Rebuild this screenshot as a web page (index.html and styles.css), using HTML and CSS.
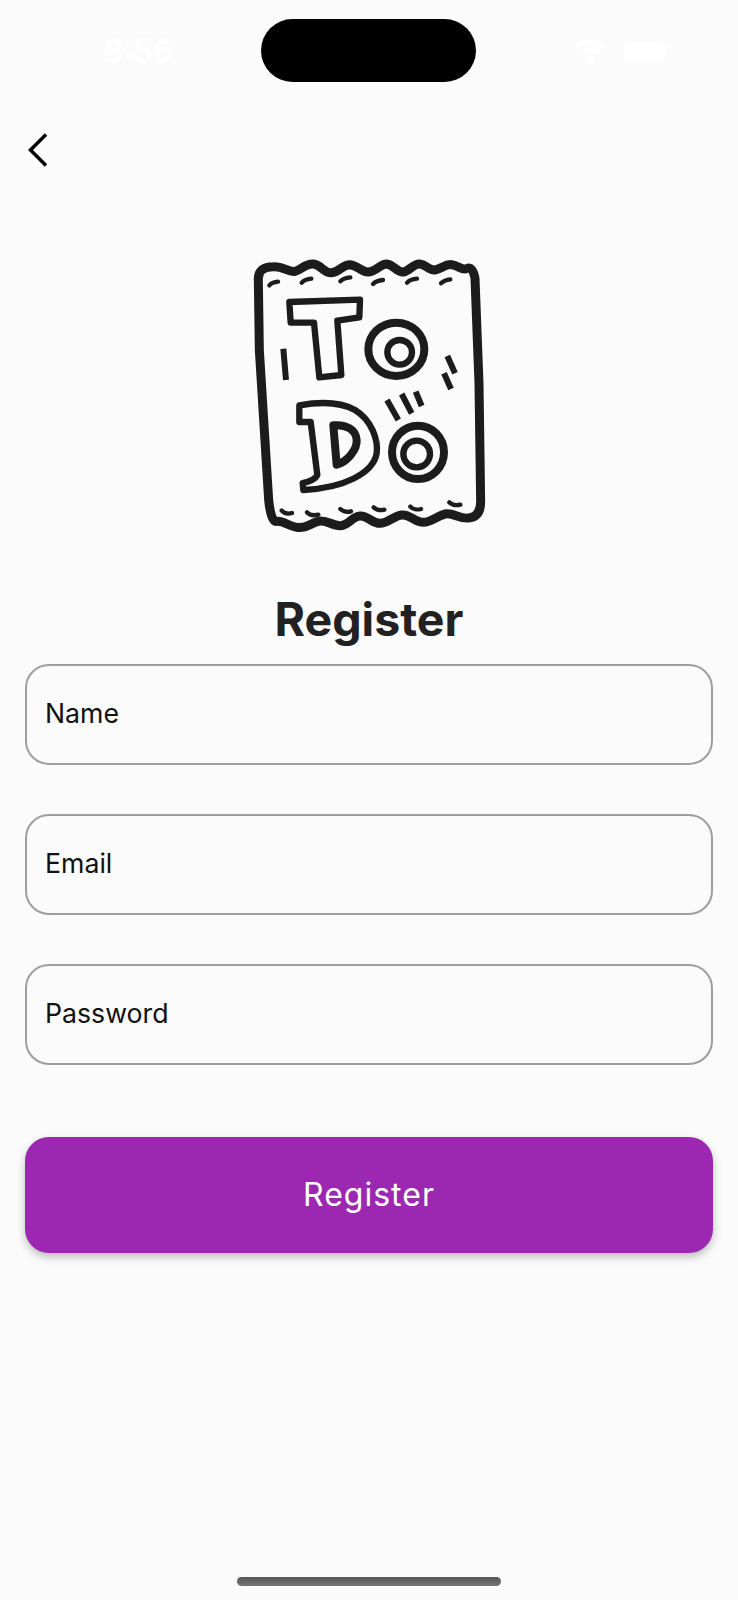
FILE: index.html
```html
<!DOCTYPE html>
<html lang="en">
<head>
<meta charset="utf-8">
<title>Register</title>
<link rel="stylesheet" href="styles.css">
</head>
<body>
<div class="screen">
  <header class="status">
    <span class="time">8:56</span>
    <div class="island"></div>
    <div class="status-icons">
      <svg class="wifi" viewBox="0 0 32 24"><path d="M2 9a20 20 0 0 1 28 0M7.500 14a12 12 0 0 1 17 0" class="wifi-arc"/><circle cx="16" cy="20" r="3.500" class="wifi-dot"/></svg>
      <div class="battery"></div>
    </div>
  </header>
  <nav class="nav">
    <svg class="back" viewBox="0 0 20 34"><path d="M18 1.500 2.500 17 18 32.500"/></svg>
  </nav>
  <svg class="logo" viewBox="0 0 780 870">
    <path class="outline" d="M55 90C53 62 72 50 100 50C130 48 145 68 165 64C185 60 195 40 220 42C245 44 250 70 275 68C300 66 305 44 330 44C355 46 365 68 385 66C410 64 420 42 440 42C462 44 470 68 490 66C510 62 520 40 540 42C560 44 565 62 585 60C605 56 615 42 635 44C655 46 665 62 680 56C692 50 700 60 705 85L717 400L722 755C722 785 710 802 685 804C660 808 640 787 615 792C590 798 575 817 550 817C525 817 510 792 485 795C460 798 445 820 420 820C395 820 385 797 360 798C335 800 325 827 300 827C275 827 260 808 235 814C210 820 200 837 170 832C145 828 130 812 110 814C98 816 90 790 86 750L58 300Z"/>
    <path class="letter" d="M148 156 360 149 358 202 292 212 304 375 238 382 222 218 152 218Z"/>
    <ellipse class="letter-thick" cx="469" cy="298" rx="84" ry="80"/>
    <circle class="letter" cx="479" cy="307" r="37"/>
    <path class="letter" d="M178 466 C240 455 300 455 345 480 C395 510 415 570 410 610 C400 670 310 715 190 720 L188 699 C205 695 225 690 232 675 L212 516 L178 516Z"/>
    <path class="letter-inner" d="M280 526 C320 522 348 540 350 570 C352 600 320 636 290 644Z"/>
    <ellipse class="letter-thick" cx="534" cy="607" rx="78" ry="80"/>
    <circle class="letter" cx="530" cy="612" r="40"/>
    <path class="tick" d="M130 296 138 390M622 318 645 370M612 370 633 417M441 450 475 510M485 432 515 490M527 425 545 468"/>
    <path class="dash" d="M88 106C94 99 104 96 114 95M185 98C192 91 203 87 214 86M301 94C308 87 320 83 331 82M399 102C406 95 418 91 429 90M501 98C508 91 520 87 531 86M603 100C610 93 620 89 631 88"/>
    <path class="dash" d="M125 782C132 790 145 792 156 789M201 787C208 795 222 797 235 794M301 777C310 785 322 787 333 784M401 772C410 780 422 782 433 779M511 770C518 778 532 780 543 777M628 757C637 765 650 767 661 764"/>
  </svg>
  <h1 class="title">Register</h1>
  <form class="form">
    <div class="field"><span class="placeholder">Name</span></div>
    <div class="field"><span class="placeholder">Email</span></div>
    <div class="field"><span class="placeholder">Password</span></div>
    <div class="button">Register</div>
  </form>
  <div class="home-indicator"></div>
</div>
</body>
</html>
```
FILE: styles.css
```css
* { box-sizing: border-box; }
html, body { margin: 0; height: 100%; }
body { background: #fbfbfb; font-family: Inter, "Liberation Sans", sans-serif; overflow: hidden; }
.screen { height: 1600px; display: flex; flex-direction: column; align-items: center; }
.status { width: 100%; height: 82px; padding: 19px 72px 0 104px; display: flex; justify-content: space-between; }
.time { color: #fff; font-size: 31px; font-weight: 600; line-height: 63px; }
.island { width: 215px; height: 63px; background: #000; border-radius: 32px; margin-left: -11px; }
.status-icons { display: flex; align-items: center; gap: 17px; height: 63px; }
.wifi { width: 32px; height: 24px; }
.wifi-arc { fill: none; stroke: #fff; stroke-width: 5; }
.wifi-dot { fill: #fff; }
.battery { width: 43px; height: 18px; border-radius: 6px; background: #fff; }
.nav { width: 100%; height: 168px; padding: 51px 0 0 28px; }
.back { display: block; width: 20px; height: 34px; }
.back path { fill: none; stroke: #000; stroke-width: 3.500; }
.logo { width: 260px; height: 290px; margin-left: 1px; flex: none; }
.outline { fill: none; stroke: #1c1c1c; stroke-width: 27; stroke-linejoin: round; }
.letter { fill: none; stroke: #1c1c1c; stroke-width: 19; stroke-linejoin: round; }
.letter-thick { fill: none; stroke: #1c1c1c; stroke-width: 24; }
.letter-inner { fill: none; stroke: #1c1c1c; stroke-width: 24; stroke-linejoin: round; }
.tick { fill: none; stroke: #1c1c1c; stroke-width: 18; }
.dash { fill: none; stroke: #1c1c1c; stroke-width: 13; stroke-linecap: round; }
.title { margin: 47px 0 0; height: 76px; font-size: 46.500px; line-height: 64px; font-weight: 700; color: #212121; }
.form { width: 100%; padding: 0 25px; display: flex; flex-direction: column; gap: 49px; margin-top: 1px; }
.field { height: 101px; border: 2px solid #9e9e9e; border-radius: 24px; padding: 0 18px 3px; display: flex; align-items: center; }
.placeholder { font-size: 26.700px; color: #111; }
.button { height: 116px; margin-top: 23px; padding-bottom: 1px; background: #9c27b0; border-radius: 24px; color: #fff; font-size: 32px; letter-spacing: 1px; display: flex; align-items: center; justify-content: center; box-shadow: 0 4px 8px rgba(0,0,0,.25); }
.home-indicator { position: absolute; left: 237px; top: 1577px; width: 264px; height: 9px; border-radius: 5px; background: linear-gradient(#555, #777); }
```
